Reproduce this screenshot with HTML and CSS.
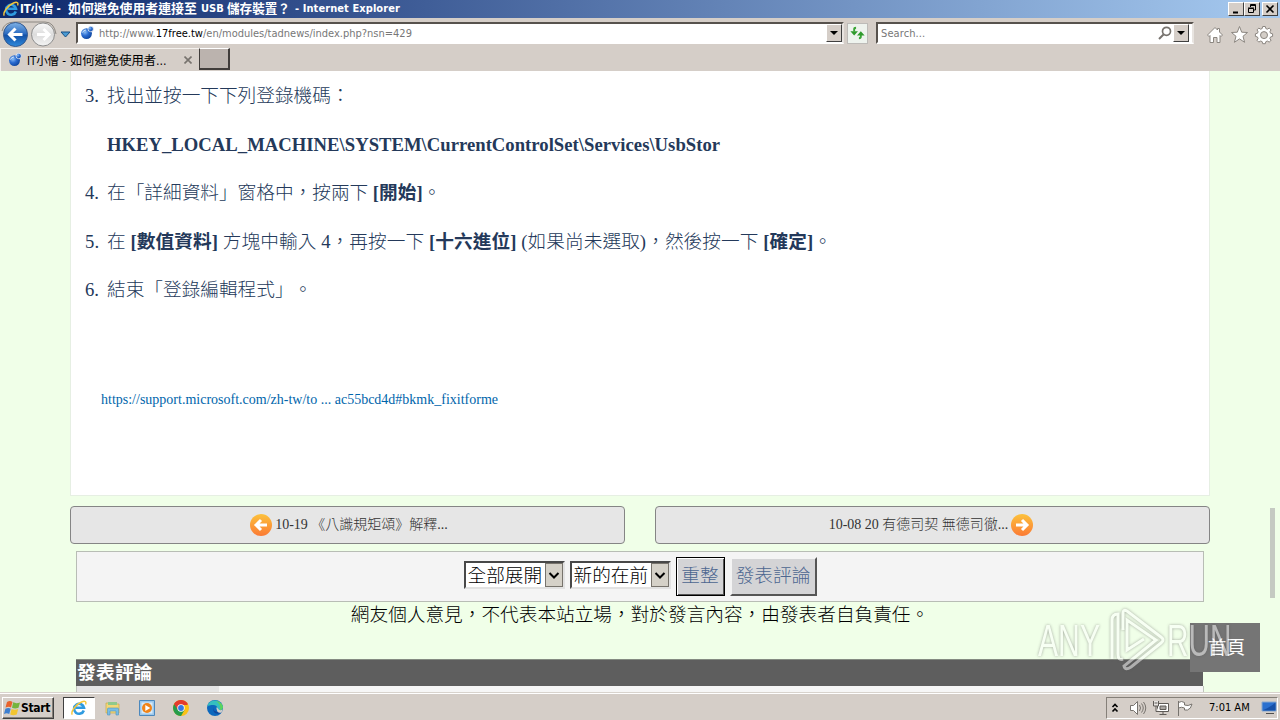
FILE: index.html
```html
<!DOCTYPE html>
<html lang="zh-Hant">
<head>
<meta charset="utf-8">
<title>IT小僧</title>
<link rel="stylesheet" href="styles.css">
</head>
<body>
<svg class="defs" width="0" height="0">
  <defs>
    <linearGradient id="orange" x1="0" y1="0" x2="0" y2="1"><stop offset="0" stop-color="#fcc23c"/><stop offset="1" stop-color="#fb7a34"/></linearGradient>
    <linearGradient id="blue" x1="0" y1="0" x2="0" y2="1"><stop offset="0" stop-color="#7fb2e6"/><stop offset=".48" stop-color="#2a6ac0"/><stop offset=".52" stop-color="#1450a6"/><stop offset="1" stop-color="#2f8bdc"/></linearGradient>
    <linearGradient id="grey" x1="0" y1="0" x2="0" y2="1"><stop offset="0" stop-color="#fafafa"/><stop offset=".5" stop-color="#dcdcdc"/><stop offset="1" stop-color="#f4f4f4"/></linearGradient>
    <radialGradient id="ball" cx=".35" cy=".35" r=".7"><stop offset="0" stop-color="#8fc0f4"/><stop offset=".5" stop-color="#2a6bd0"/><stop offset="1" stop-color="#0f469e"/></radialGradient>
    <symbol id="ie" viewBox="0 0 16 16">
      <path d="M12.800 10.500A5 5 0 1 1 13 7.800H4.600" fill="none" stroke="#2f9be0" stroke-width="2.600"/>
      <path d="M1.300 14.600C-.6 12 4.600 4.500 10.500 2 14 .5 15.700 1.500 14.600 4.400" fill="none" stroke="#f5c63a" stroke-width="1.400"/>
    </symbol>
    <symbol id="favicon" viewBox="0 0 14 14">
      <circle cx="6.500" cy="7.600" r="5.400" fill="url(#ball)"/><circle cx="10.700" cy="3" r="2.700" fill="url(#ball)" stroke="#fff" stroke-width=".7"/><path d="M2.500 6.500q1-2.500 3.500-2.500" stroke="#cfe2fa" fill="none"/>
    </symbol>
  </defs>
</svg>

<header class="titlebar">
  <svg class="title-icon" viewBox="0 0 16 16"><use href="#ie"/></svg>
  <div class="title-text"><span class="t1">IT小僧 -</span><span class="t2">如何避免使用者連接至</span><span class="t3">USB</span><span class="t4">儲存裝置？</span><span class="t5">- Internet Explorer</span></div>
  <div class="win-buttons">
    <span class="win-btn"><svg viewBox="0 0 12 10"><path d="M3 8.500h5" stroke="#000" stroke-width="2"/></svg></span>
    <span class="win-btn"><svg viewBox="0 0 12 10"><path d="M4.500 3V.5H9.500V6H8M4 1.500h6M2.500 4.500h5v4h-5zM2 4h6" stroke="#000" fill="none"/></svg></span>
    <span class="win-btn close"><svg viewBox="0 0 12 10"><path d="M2.500 1.500l7 7m0-7l-7 7" stroke="#000" stroke-width="1.600"/></svg></span>
  </div>
</header>

<nav class="toolbar">
  <svg class="history" viewBox="0 0 72 28">
    <path d="M2 11Q4 2 15 2H45Q54 2 56 14" fill="none" stroke="#8c8882"/>
    <circle cx="15.500" cy="14.500" r="12" fill="url(#blue)" stroke="#33588f"/>
    <path d="M22.500 14.500H9.500M15.500 8.500l-6 6 6 6" fill="none" stroke="#fff" stroke-width="3"/>
    <circle cx="43" cy="14.500" r="11.500" fill="url(#grey)" stroke="#8d8d8d"/>
    <path d="M37 14.500h12M43.500 9l5.500 5.500-5.500 5.500" fill="none" stroke="#fff" stroke-width="3"/>
    <path d="M61 12h9l-4.500 5z" fill="#4a9bd4" stroke="#174f83"/>
  </svg>
  <div class="field address">
    <svg class="fav" viewBox="0 0 14 14"><use href="#favicon"/></svg>
    <div class="url">http://www.<b>17free.tw</b>/en/modules/tadnews/index.php?nsn=429</div>
    <span class="drop"><svg viewBox="0 0 14 16"><path d="M3 6h8l-4 4z"/></svg></span>
  </div>
  <span class="refresh"><svg viewBox="0 0 20 20"><path d="M6.500 8V5.500q0-1.500 2-1.500M13.500 11v2.500q0 1.500-2 1.500" stroke="#3aa535" stroke-width="2" fill="none"/><path d="M2.500 7.500h8l-4 4.500zM9.500 12l4-4.500 4 4.500z" fill="#2f9a2d"/></svg></span>
  <div class="field search">
    <div class="placeholder">Search...</div>
    <svg class="mag" viewBox="0 0 14 14"><circle cx="8.500" cy="5.300" r="4" fill="none" stroke="#77736e" stroke-width="1.700"/><path d="M5.500 8.500L1 13" stroke="#77736e" stroke-width="2"/></svg>
    <span class="drop"><svg viewBox="0 0 14 16"><path d="M3 6h8l-4 4z"/></svg></span>
  </div>
  <svg class="tools" viewBox="0 0 68 20" fill="#fff" stroke="#8b8680" stroke-linejoin="round">
    <path d="M1.500 10L9 2.500l2.500 2.500V3.500h2V7l3 3-1.500 1.500-1-1V17.500H11v-5H7.500v5H4v-7l-1 1z"/>
    <path d="M33.500 1.500l2.200 5.700 5.800.3-4.500 3.800 1.600 6-5.100-3.400-5.100 3.400 1.600-6-4.500-3.800 5.800-.3z"/>
    <path d="M56.700 1.500h2.600l.5 2 1.500.7 1.900-1.100 1.800 1.800-1.100 1.900.7 1.500 2 .5v2.600l-2 .5-.7 1.500 1.100 1.900-1.800 1.800-1.900-1.100-1.500.7-.5 2h-2.600l-.5-2-1.500-.7-1.900 1.100-1.800-1.800 1.100-1.900-.7-1.500-2-.5V8.800l2-.5.700-1.500L51 4.900l1.800-1.800 1.900 1.100 1.500-.7z"/>
    <circle cx="58" cy="10.100" r="3.500" fill="#d4cec8"/>
  </svg>
</nav>

<div class="tabs">
  <div class="tab">
    <svg class="fav" viewBox="0 0 14 14"><use href="#favicon"/></svg>
    <span class="tab-a">IT小僧 -</span><span class="tab-b">如何避免使用者...</span>
    <svg class="tab-x" viewBox="0 0 8 8"><path d="M.5 .5l7 7m0-7l-7 7" stroke="#77736e" stroke-width="1.600"/></svg>
  </div>
  <div class="new-tab"></div>
</div>

<main class="page">
  <article class="article">
    <ol class="steps">
      <li><span class="num">3.</span><p>找出並按一下下列登錄機碼：</p></li>
      <li class="key"><span class="num"></span><p><b>HKEY_LOCAL_MACHINE\SYSTEM\CurrentControlSet\Services\UsbStor</b></p></li>
      <li><span class="num">4.</span><p>在「詳細資料」窗格中，按兩下 <b>[開始]</b>。</p></li>
      <li class="long"><span class="num">5.</span><p>在 <b>[數值資料]</b> 方塊中輸入 4，再按一下 <b>[十六進位]</b> (如果尚未選取)，然後按一下 <b>[確定]</b>。</p></li>
      <li><span class="num">6.</span><p>結束「登錄編輯程式」。</p></li>
    </ol>
    <a class="link">https://support.microsoft.com/zh-tw/to ... ac55bcd4d#bkmk_fixitforme</a>
  </article>

  <div class="pager">
    <div class="pager-btn prev"><svg viewBox="0 0 22 22"><circle cx="11" cy="11" r="11" fill="url(#orange)"/><path d="M17 11H7M11 6l-5 5 5 5" fill="none" stroke="#fff" stroke-width="3"/></svg><span>10-19 《八識規矩頌》解釋...</span></div>
    <div class="pager-btn next"><span>10-08 20 有德司契 無德司徹...</span><svg viewBox="0 0 22 22"><circle cx="11" cy="11" r="11" fill="url(#orange)"/><path d="M5 11h10M11 6l5 5-5 5" fill="none" stroke="#fff" stroke-width="3"/></svg></div>
  </div>

  <div class="controls">
    <div class="select"><span>全部展開</span><i><svg viewBox="0 0 16 22"><path d="M3.500 9l4.500 4.500L12.500 9" fill="none" stroke="#000" stroke-width="2"/></svg></i></div>
    <div class="select"><span>新的在前</span><i><svg viewBox="0 0 16 22"><path d="M3.500 9l4.500 4.500L12.500 9" fill="none" stroke="#000" stroke-width="2"/></svg></i></div>
    <div class="btn default">重整</div>
    <div class="btn post">發表評論</div>
  </div>
  <p class="notice">網友個人意見，不代表本站立場，對於發言內容，由發表者自負責任。</p>
  <h4 class="form-title">發表評論</h4>
  <div class="form-row"><span></span></div>

  <div class="scroll-thumb"></div>
  <div class="home"><span>首頁</span></div>
  <div class="watermark">
    <span class="any">ANY</span>
    <svg viewBox="0 0 60 66"><path d="M5 51V12q0-6 6-6v40q0 7 5 5M16 22V5q0-4 4-2l34 26q4 3 0 6L24 59q-6 4-7-1l32-26-29-20v30l17-11" fill="none" stroke="#fff" stroke-width="3"/></svg>
    <span class="run">RUN</span>
  </div>
</main>

<footer class="taskbar">
  <div class="start"><svg viewBox="0 0 16 16"><path d="M3 2q3-2 5.500 0L7 7.500q-2-1.500-5.500 0z" fill="#e8622c"/><path d="M9.200 2.300q3 1.600 6.800.1L14.500 7.700q-3.500 1.500-6.500 0z" fill="#75b43c"/><path d="M1.400 8.700q3-1.500 5.300 0L5.200 14q-2.500-1.500-5.200 0z" fill="#3d7fd0"/><path d="M7.600 9q3 1.500 6.600.1L12.700 14.500q-3.500 1.500-6.500 0z" fill="#f3c52f"/></svg><span>Start</span></div>
  <div class="task active"><svg viewBox="0 0 16 16"><use href="#ie"/></svg></div>
  <div class="task"><svg viewBox="0 0 16 16"><path d="M1 3h5l1 1h7v9H1z" fill="#f2d778" stroke="#c9a94c" stroke-width=".7"/><path d="M3 2h9v3H3z" fill="#8fc98c"/><path d="M2.500 15V9q0-1 1-1h9q1 0 1 1v6H11v-4H5v4z" fill="#78bde6" stroke="#4f93bf" stroke-width=".6"/></svg></div>
  <div class="task"><svg viewBox="0 0 16 16"><path d="M.5.500h15v15H.5z" fill="#9cc8ec" stroke="#4c88bd"/><path d="M2.500 2.500h11v11h-11z" fill="#d8ebf8"/><circle cx="8" cy="8" r="5" fill="#f08318"/><path d="M6.300 5l5 3-5 3z" fill="#fff"/></svg></div>
  <div class="task"><svg viewBox="0 0 16 16"><circle cx="8" cy="8" r="8" fill="#fbc116"/><path d="M8 8L1.100 4A8 8 0 0 1 14.900 4H8z" fill="#e33b2e"/><path d="M1.100 4A8 8 0 0 0 8 16l3.500-6L8 8z" fill="#269c4b"/><path d="M1.100 4L5 10l3-5h6.900A8 8 0 0 0 1.100 4z" fill="#e33b2e"/><circle cx="8" cy="8" r="3.700" fill="#fff"/><circle cx="8" cy="8" r="2.900" fill="#3478e5"/></svg></div>
  <div class="task"><svg viewBox="0 0 16 16"><circle cx="8" cy="8" r="8" fill="#0d68bd"/><path d="M.3 6.500C2-1.500 13.500-1.500 15.900 6.500c.5 4-4.500 5-6 3.500 1.600-2.500-.5-5-3.500-5S1 5.500.3 6.500z" fill="#35bfc0"/><path d="M9 1q6 1 7 6-.3 3-3.500 3.500Q15 5 9 1z" fill="#5bd35d"/><path d="M6.500 7.500Q6 13 14.500 12l-1.800 1.500Q5 14.500 6.500 7.500z" fill="#12479b"/><path d="M9.900 10q-1-1.500 0-3l1 1.500q1.500 3 5 1l-1.500 3q-4 1-4.500-2.500z" fill="#d6d0ca"/></svg></div>
  <div class="tray">
    <svg class="chev" viewBox="0 0 8 10"><path d="M1.500 4L4 1.500 6.500 4M1.500 8.500L4 6l2.500 2.500" fill="none" stroke="#000" stroke-width="1.600"/></svg>
    <svg class="vol" viewBox="0 0 18 16" fill="#fff" stroke="#77736e"><path d="M1.500 5.500h3l4-4v13l-4-4h-3z"/><path d="M10.500 5q2 3 0 6M12.500 3.500q3.500 4.500 0 9M14.500 2q4.500 6 0 12" fill="none"/></svg>
    <svg class="net" viewBox="0 0 16 16" fill="#fff" stroke="#5f5b57"><path d="M4.500 3.500h11v8h-11z"/><path d="M7 6h6v3.500H7z" fill="#aaa6a2"/><path d="M6.500 14.500h7M10 12v2"/><path d="M.5 1v5h5V1M1.500 3h3M3 6v5.500h3" fill="#e8e5e2"/></svg>
    <svg class="flag" viewBox="0 0 16 16" fill="#fff" stroke="#77736e"><path d="M1.500 1v15M1.500 2.500q3-2 6 0v2.500q3.500 1.500 7.500-1-1 5-4.500 6H7.500V8q-3-1.500-6 0z"/></svg>
    <span class="clock">7:01 AM</span>
    <svg class="screen" viewBox="0 0 16 14"><path d="M1 1h14v9H1z" fill="#2b70cf" stroke="#88a8cf"/><path d="M1.500 9.500Q8 7 14.500 1.500v8z" fill="#1650a8"/><path d="M5 12.500h8" stroke="#4e4e4e"/></svg>
  </div>
</footer>
</body>
</html>
```
FILE: styles.css
```css
* { box-sizing: border-box; }
body {
  margin: 0; width: 1280px; height: 720px; overflow: hidden;
  display: flex; flex-direction: column;
  background: #d5cec8;
  font-family: "DejaVu Sans Condensed", "Noto Sans CJK TC", sans-serif;
  font-size: 11px; color: #000;
}
.defs { position: absolute; }
svg { display: block; flex: none; }
p, h4, ol { margin: 0; padding: 0; }

.titlebar {
  height: 18px; flex: none; display: flex; align-items: center;
  padding: 0 2px 0 3px;
  background: linear-gradient(90deg, #0d286c, #a6caf0);
}
.title-icon { width: 16px; height: 16px; }
.title-text { display: flex; flex: 1; margin-left: 1px; color: #fff; font-weight: bold; line-height: 18px; white-space: nowrap; }
.title-text span { flex: none; }
.t1 { width: 48px; font-size: 11.500px; letter-spacing: -.2px; }
.t2 { width: 133px; font-size: 12.900px; }
.t3 { width: 26px; }
.t4 { width: 68px; font-size: 12.600px; }
.t5 { letter-spacing: .08px; }
.win-buttons { display: flex; }
.win-btn {
  width: 16px; height: 14px; padding: 1px;
  background: #d5cec8; border: 1px solid; border-color: #fff #404040 #404040 #fff;
}
.win-btn svg { width: 12px; height: 10px; }
.win-btn.close { margin-left: 2px; }

.toolbar { height: 30px; flex: none; display: flex; align-items: flex-start; padding-top: 2px; }
.history { width: 72px; height: 28px; margin-right: 4px; }
.field {
  height: 22px; margin-top: 2px; background: #fff; display: flex; align-items: center;
  border: 2px solid; border-color: #57524d #e8e4e0 #fff #57524d;
}
.address { width: 768px; padding-left: 2px; }
.fav { width: 14px; height: 14px; }
.url { flex: 1; margin-left: 5px; color: #777; font-size: 11px; line-height: 13px; }
.url b { color: #000; font-weight: normal; }
.drop {
  width: 16px; height: 18px; background: #d5cec8; flex: none;
  border: 1px solid; border-color: #fff #404040 #404040 #fff;
}
.drop svg { width: 14px; height: 16px; }
.refresh { width: 21px; height: 21px; margin: 3px 8px 0 3px; background: #eef3ee; border: 1px solid #bdbbb8; flex: none; }
.refresh svg { width: 19px; height: 19px; }
.search { width: 318px; padding-right: 3px; }
.placeholder { flex: 1; margin-left: 3px; color: #777; letter-spacing: .1px; }
.mag { width: 14px; height: 14px; margin-right: 1px; }
.tools { width: 68px; height: 20px; margin: 5px 0 0 12px; }

.tabs { height: 23px; flex: none; display: flex; }
.tab { width: 199px; display: flex; align-items: center; padding-left: 7px; border-top: 1px solid #f5f2ef; border-left: 1px solid #f5f2ef; white-space: nowrap; font-size: 12.300px; }
.tab-a { width: 43px; margin-left: 5px; font-size: 11.500px; letter-spacing: -.1px; }
.tab-b { width: 113px; }
.tab-x { width: 8px; height: 8px; margin-left: 1px; }
.new-tab { width: 31px; height: 22px; background: #bbb3ae; border: 1px solid #403c3a; border-width: 1px 2px 2px 1px; border-top-color: #fff; }

.page {
  position: relative; height: 621px; flex: none; overflow: hidden;
  background: #f0ffe8; color: #000;
  font: 300 18.667px/24px "Liberation Serif", "Noto Sans CJK TC", serif;
  text-spacing-trim: space-all;
}
.page b { font-weight: bold; }
.article { width: 1140px; height: 425px; margin-left: 70px; padding: 13px 0 0 12px; background: #fff; border: 1px solid #e6efe3; border-top: 0; color: #24395a; }
.steps { list-style: none; }
.steps li { display: flex; height: 24px; margin-bottom: 24.500px; white-space: nowrap; }
.steps .num { width: 24px; padding-left: 2px; }
.steps .key { letter-spacing: .02px; }
.steps .long { letter-spacing: .075px; }
.link { display: block; margin: 61px 0 0 18px; padding-top: 0; font-size: 14px; color: #0065ab; }
.steps + .link { padding-top: 1px; margin-top: 85px; }
.steps li:last-child { margin-bottom: 0; }

.pager { display: grid; grid-template-columns: 555px 555px; gap: 30px; margin: 10px 0 0 70px; }
.pager-btn {
  height: 38px; display: flex; justify-content: center; align-items: center; gap: 3px;
  background: #e6e6e6; border: 1px solid #858585; border-radius: 4px;
  color: #333; font-size: 14px; white-space: nowrap;
}
.pager-btn svg { width: 22px; height: 22px; }
.pager-btn.prev { padding-left: 3px; }
.pager-btn.next { padding-right: 3px; }

.controls {
  width: 1128px; height: 51px; margin: 7px 0 0 76px; padding-top: 5px;
  display: flex; justify-content: center; gap: 5px;
  background: #f4f4f4; border: 1px solid #b8bdb5;
}
.select { width: 101px; height: 28px; margin-top: 4px; display: flex; background: #fff; border: 2px solid; border-color: #484848 #e2e2e2 #e2e2e2 #484848; }
.select span { flex: 1; padding-left: 2px; white-space: nowrap; line-height: 25px; }
.select i { width: 18px; height: 24px; background: #d5d1c8; border: 1px solid #77736c; }
.select svg { width: 16px; height: 22px; }
.btn { height: 39px; line-height: 34px; text-align: center; color: #4c6690; background: #d4d4d6; border: 2px solid; border-color: #f4f4f4 #555 #555 #f4f4f4; white-space: nowrap; }
.btn.default { width: 49px; border: 1px solid #000; box-shadow: inset 1px 1px #fff, inset -1px -1px #555; line-height: 36px; }
.btn.post { width: 87px; }
.notice { height: 57px; text-align: center; line-height: 26px; }
.form-title { width: 1127px; height: 27px; margin-left: 76px; padding-left: 1px; line-height: 25px; font-size: 18.667px; font-weight: bold; letter-spacing: .3px; color: #fff; background: #5e5e5e; border-top: 1px solid #858b82; }
.form-row { width: 1128px; height: 8px; margin-left: 76px; background: #f6f6f6; border: 1px solid #bfc4bc; border-width: 0 1px; }
.form-row span { display: block; width: 142px; height: 8px; background: #e5e5e5; }

.scroll-thumb { position: absolute; left: 1270px; top: 437px; width: 5px; height: 90px; background: #c5cac2; }
.home { position: absolute; left: 1190px; top: 552px; width: 70px; height: 49px; background: #757575; color: #fff; text-align: center; line-height: 50px; font-weight: 400; }
.home span { padding-left: 3px; }
.watermark {
  position: absolute; left: 1038px; top: 537px; width: 200px; height: 66px;
  display: flex; align-items: center; opacity: .5; color: #fff;
  font: 45px/66px "Liberation Sans", sans-serif;
  filter: drop-shadow(0 0 1.500px #555);
}
.watermark span { display: block; transform-origin: 0 50%; white-space: nowrap; }
.watermark .any { width: 69px; transform: scaleX(.67); }
.watermark svg { width: 60px; height: 66px; }
.watermark .run { width: 66px; transform: scaleX(.66); }

.taskbar { height: 28px; flex: none; display: flex; align-items: center; padding-top: 2px; border-top: 1px solid #d8d3cd; box-shadow: inset 0 1px #fff; }
.start { width: 52px; height: 22px; margin-left: 2px; padding-left: 1px; display: flex; align-items: center; gap: 1px; font-weight: bold; font-size: 12px; border: 1px solid; border-color: #fff #404040 #404040 #fff; box-shadow: inset -1px -1px #858079; letter-spacing: -.35px; }
.start svg { width: 16px; height: 16px; }
.task { width: 32px; height: 22px; margin-right: 2px; display: grid; place-items: center; }
.task svg { width: 16px; height: 16px; }
.task.active { margin-left: 9px; background: #fff; border: 1px solid; border-color: #404040 #fff #fff #404040; }
.tray { width: 172px; height: 22px; margin: 0 2px 0 auto; display: flex; align-items: center; border: 1px solid; border-color: #858079 #fff #fff #858079; padding-left: 4px; }
.chev { width: 8px; height: 10px; }
.vol { width: 18px; height: 16px; margin-left: 10px; }
.net { width: 16px; height: 16px; margin-left: 6px; }
.flag { width: 16px; height: 16px; margin-left: 8px; }
.clock { width: 43px; margin-left: 16px; white-space: nowrap; }
.screen { width: 16px; height: 14px; margin-left: 9px; }
```
